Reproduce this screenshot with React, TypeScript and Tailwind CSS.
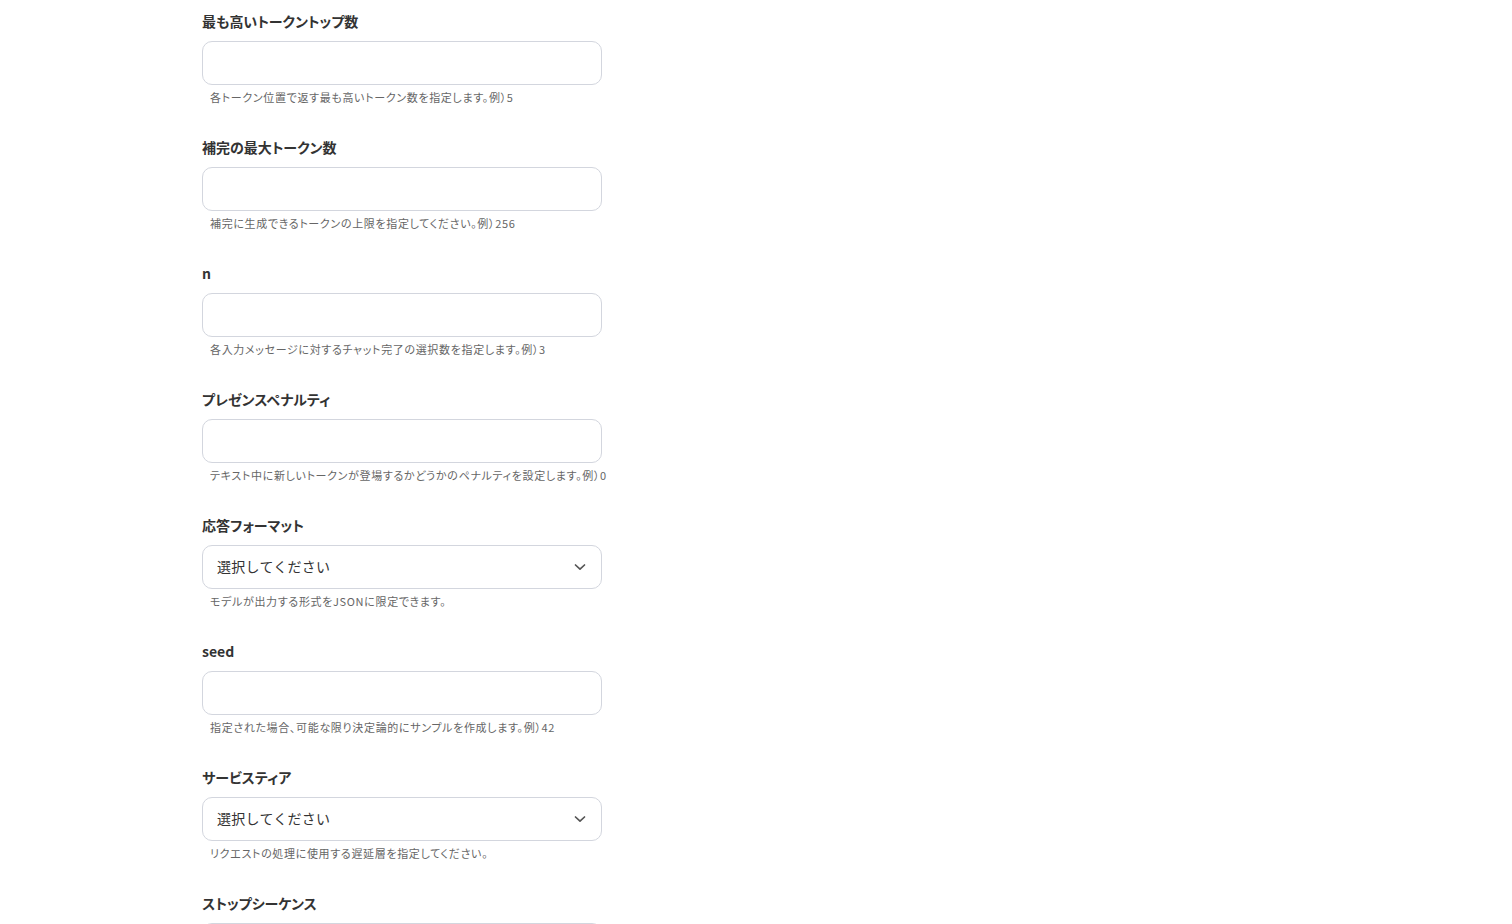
const fields: { label: string; hint: string; select?: boolean }[] = [
  { label: "最も高いトークントップ数", hint: "各トークン位置で返す最も高いトークン数を指定します。例）5" },
  { label: "補完の最大トークン数", hint: "補完に生成できるトークンの上限を指定してください。例）256" },
  { label: "n", hint: "各入力メッセージに対するチャット完了の選択数を指定します。例）3" },
  { label: "プレゼンスペナルティ", hint: "テキスト中に新しいトークンが登場するかどうかのペナルティを設定します。例）0" },
  { label: "応答フォーマット", hint: "モデルが出力する形式をJSONに限定できます。", select: true },
  { label: "seed", hint: "指定された場合、可能な限り決定論的にサンプルを作成します。例）42" },
  { label: "サービスティア", hint: "リクエストの処理に使用する遅延層を指定してください。", select: true },
  { label: "ストップシーケンス", hint: "" },
];

function Chevron() {
  return (
    <svg width="12" height="12" viewBox="0 0 12 12" fill="none">
      <path d="M1.5 4L6 8.2L10.5 4" stroke="#555" strokeWidth="1.7" strokeLinecap="round" strokeLinejoin="round" />
    </svg>
  );
}

export default function App() {
  return (
    <div
      className="min-h-screen bg-white pl-[202px] pt-3 text-[#333]"
      style={{ fontFamily: '"Noto Sans CJK JP", "Noto Sans", sans-serif' }}
    >
      <div className="flex w-[400px] flex-col">
        {fields.map((f) => (
          <div key={f.label} className="h-[126px] shrink-0">
            <label className="block h-5 text-[14px] font-bold leading-[18px] text-[#333] [font-feature-settings:'palt']">
              {f.label}
            </label>
            <div className="mt-[9px] flex h-11 items-center justify-between rounded-[10px] border border-[#d3d6de] bg-white pl-[14px] pr-[15px]">
              {f.select && (
                <>
                  <span className="-mt-[3px] text-[14px] leading-5 tracking-[0.02em] text-[#333]">選択してください</span>
                  <Chevron />
                </>
              )}
            </div>
            {f.hint && (
              <p className="mt-1 whitespace-nowrap pl-2 text-[11px] leading-4 tracking-[0.06em] text-[#666] [font-feature-settings:'palt']">
                {f.hint}
              </p>
            )}
          </div>
        ))}
      </div>
    </div>
  );
}
